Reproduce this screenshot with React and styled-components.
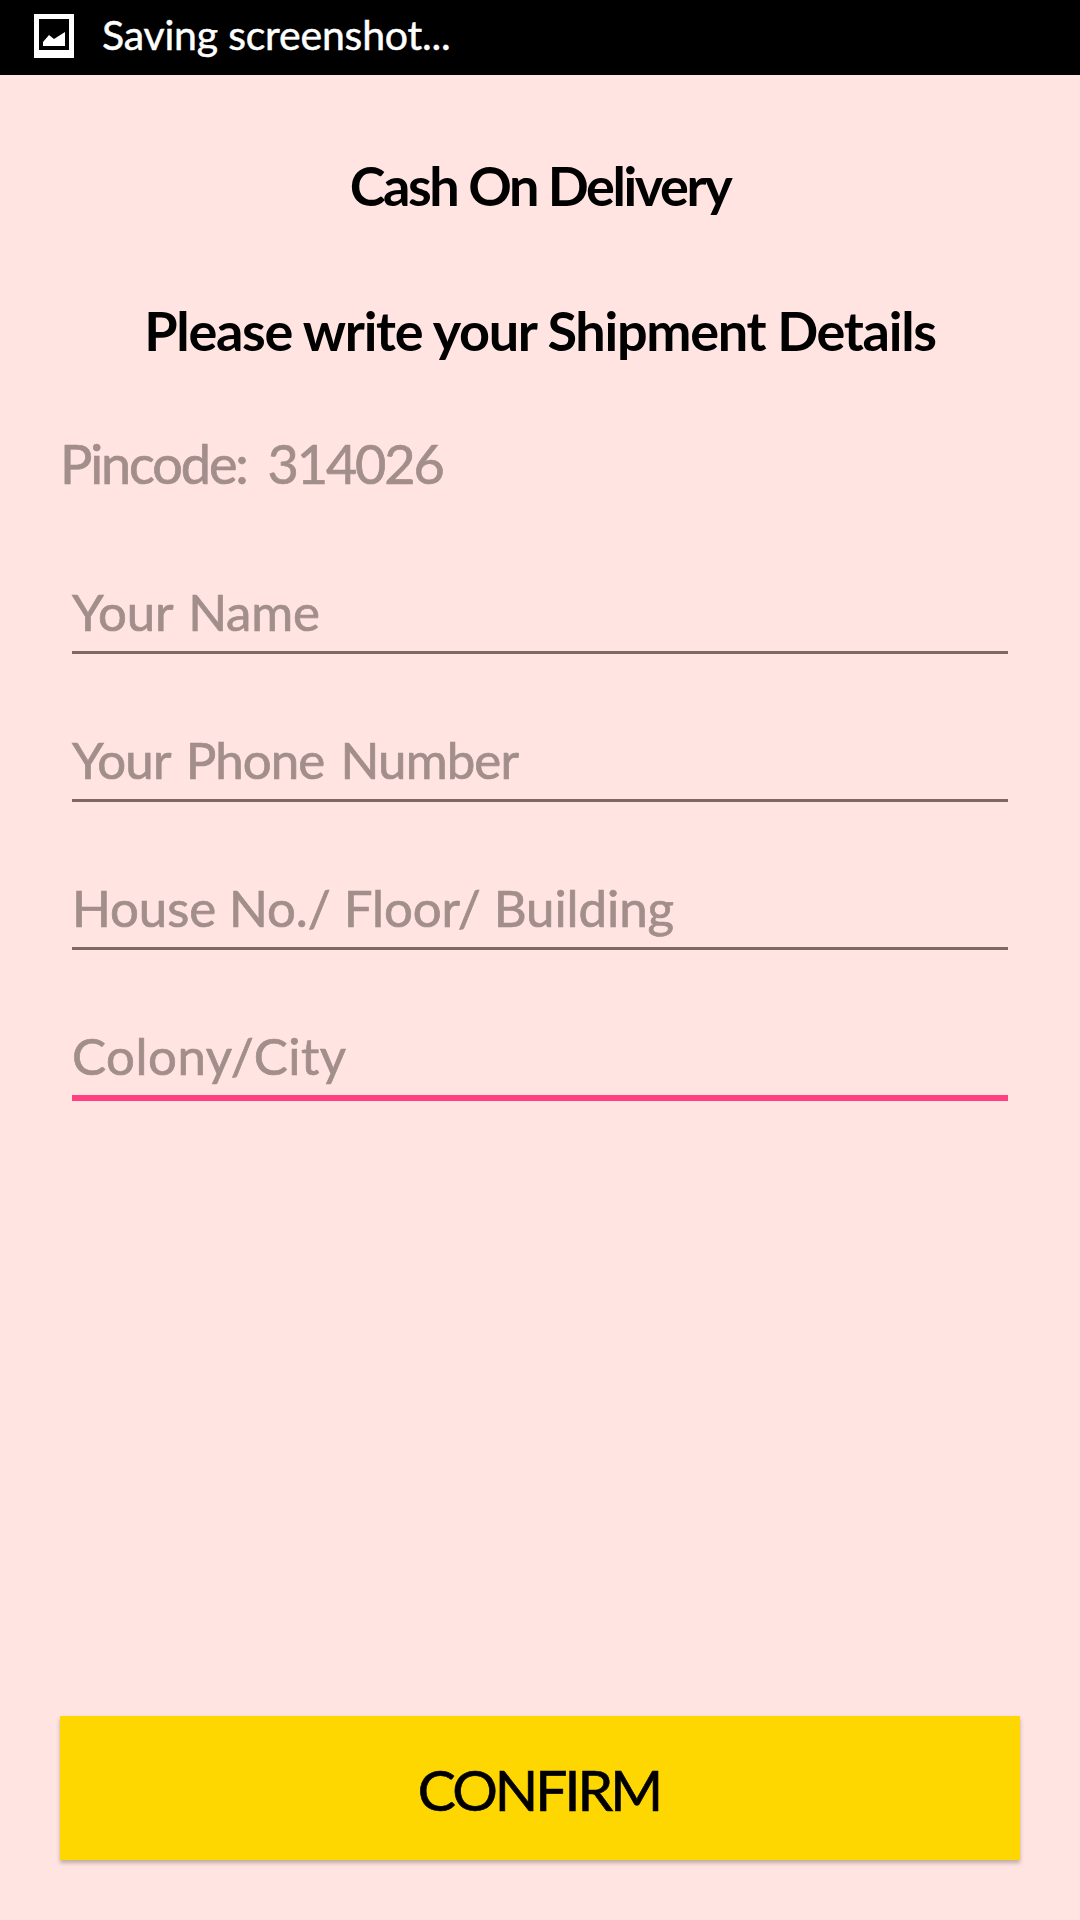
import styled, { createGlobalStyle } from "styled-components";

const fields = [
  { name: "name", label: "Your Name", spacing: -0.2, wordSpacing: 3 },
  { name: "phone", label: "Your Phone Number", spacing: -0.9, wordSpacing: 4 },
  { name: "house", label: "House No./ Floor/ Building", spacing: -0.1 },
  { name: "city", label: "Colony/City", spacing: 0.5, active: true },
];

const App = () => {
  return (
    <>
      <GlobalStyle />
      <ScreenContainer>
        <StatusBar>
          <svg width="40" height="44" viewBox="0 0 40 44">
            <path
              fill="#ffffff"
              fillRule="evenodd"
              d="M0 0H40V44H0ZM5 5V36H35V5ZM9 28L15 21L20 25L31 18V32H9Z"
            />
          </svg>
          <StatusText>Saving screenshot...</StatusText>
        </StatusBar>
        <MainContent>
          <Title $spacing={-2.4}>Cash On Delivery</Title>
          <Subtitle $spacing={-1.3}>Please write your Shipment Details</Subtitle>
          <Pincode>Pincode: 314026</Pincode>
          <ShipmentForm>
            {fields.map((field) => (
              <Field key={field.name} $active={field.active}>
                <FieldLabel
                  $spacing={field.spacing}
                  $wordSpacing={field.wordSpacing}
                >
                  {field.label}
                </FieldLabel>
              </Field>
            ))}
          </ShipmentForm>
          <ConfirmButton>CONFIRM</ConfirmButton>
        </MainContent>
      </ScreenContainer>
    </>
  );
};

export default App;

// Styled components

const GlobalStyle = createGlobalStyle`
  * {
    box-sizing: border-box;
    margin: 0;
    padding: 0;
  }

  body {
    background-color: #ffe4e1;
    font-family: Lato, "Open Sans", sans-serif;
  }
`;

const ScreenContainer = styled.div`
  display: flex;
  flex-direction: column;

  width: 1080px;
  height: 1920px;

  background-color: #ffe4e1;
`;

const StatusBar = styled.header`
  display: flex;
  align-items: flex-start;
  gap: 28px;

  height: 75px;
  padding: 14px 34px 0;

  background-color: #000000;
`;

const StatusText = styled.p`
  font-size: 41px;
  line-height: 42px;
  letter-spacing: -0.2px;
  white-space: nowrap;
  -webkit-text-stroke: 0.5px currentColor;

  color: #ffffff;
`;

const MainContent = styled.main`
  display: flex;
  flex: 1;
  flex-direction: column;

  padding: 75px 60px 60px;
`;

const Title = styled.h1`
  height: 72px;

  font-size: 54px;
  font-weight: 700;
  line-height: 72px;
  letter-spacing: ${(props) => props.$spacing}px;
  text-align: center;
  white-space: nowrap;

  color: #000000;
`;

const Subtitle = styled(Title).attrs({ as: "h2" })`
  margin-top: 73px;
`;

const Pincode = styled.p`
  height: 72px;
  margin-top: 61px;

  font-size: 54px;
  line-height: 72px;
  letter-spacing: -2.1px;
  word-spacing: 9px;
  white-space: nowrap;
  -webkit-text-stroke: 0.7px currentColor;

  color: #a28e8b;
`;

const ShipmentForm = styled.form`
  display: flex;
  flex-direction: column;

  margin-top: 6px;
  padding: 0 12px;
`;

const Field = styled.div`
  display: flex;
  align-items: flex-end;

  height: ${(props) => (props.$active ? 151 : 148)}px;
  padding-bottom: 3px;

  border-bottom: ${(props) =>
    props.$active ? "6px solid #ff4081" : "3px solid #7d6864"};
`;

const FieldLabel = styled.label`
  font-size: 51px;
  line-height: 72px;
  letter-spacing: ${(props) => props.$spacing}px;
  word-spacing: ${(props) => props.$wordSpacing || 0}px;
  white-space: nowrap;
  -webkit-text-stroke: 0.7px currentColor;

  color: #a28e8b;
`;

const ConfirmButton = styled.button`
  height: 144px;
  margin-top: auto;
  padding: 2px 2px 0 0;

  border: none;

  background-color: #ffd700;
  box-shadow: 0 3px 4px rgba(0, 0, 0, 0.25);

  font-family: inherit;
  font-size: 57px;
  letter-spacing: -3px;
  -webkit-text-stroke: 0.7px currentColor;
  color: #000000;

  cursor: pointer;
`;
